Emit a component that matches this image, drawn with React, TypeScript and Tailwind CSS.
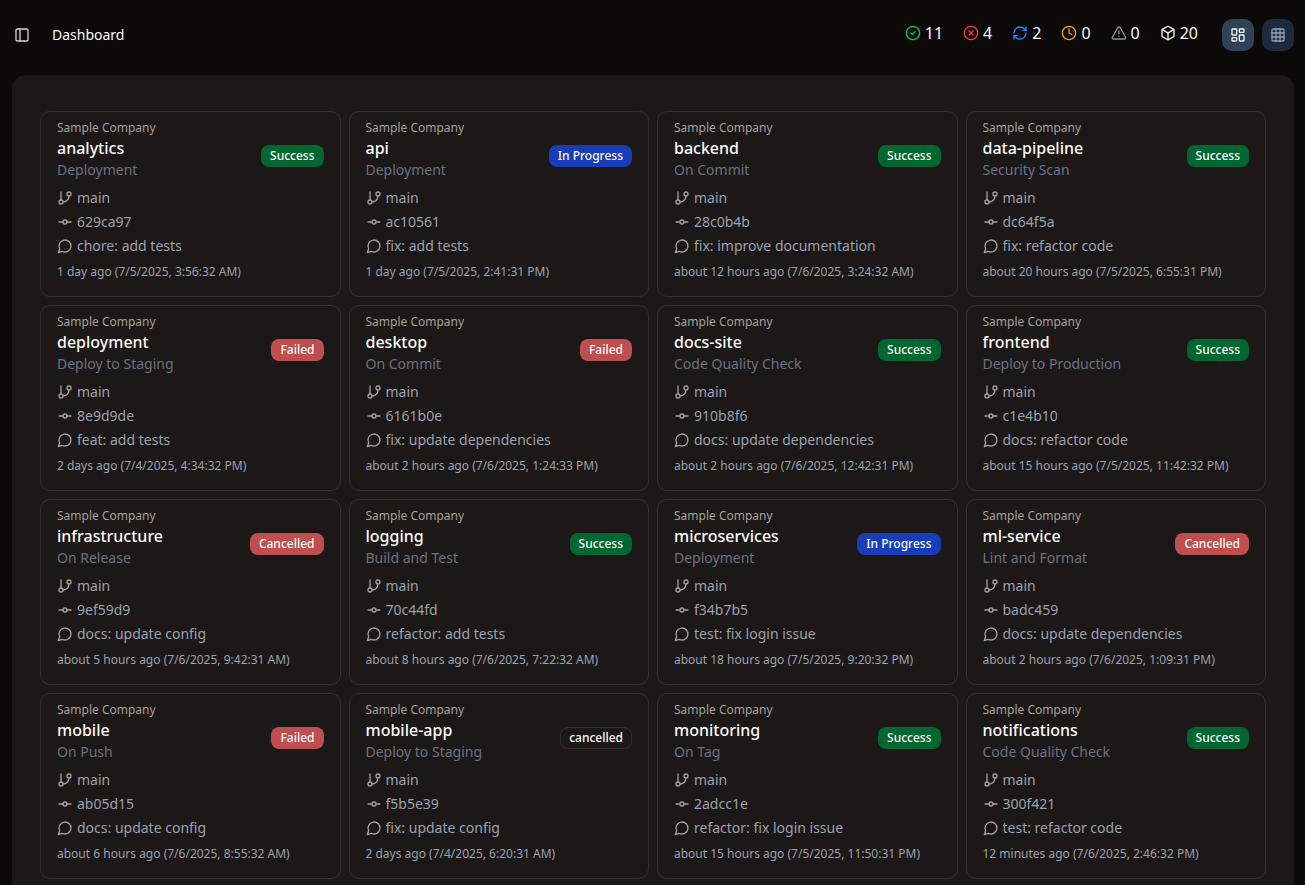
import { useState } from 'react';
import type { ReactNode } from 'react';
import {
  Box,
  CircleCheck,
  CircleX,
  Clock,
  GitBranch,
  GitCommitHorizontal,
  Grid3x3,
  LayoutDashboard,
  PanelLeft,
  RefreshCw,
  TriangleAlert,
} from 'lucide-react';

type Status = 'Success' | 'In Progress' | 'Failed' | 'Cancelled' | 'cancelled';

interface Run {
  name: string;
  workflow: string;
  status: Status;
  commit: string;
  message: string;
  time: string;
}

const badgeStyles: Record<Status, string> = {
  Success: 'border-transparent bg-[#016630]',
  'In Progress': 'border-transparent bg-[#193cb8]',
  Failed: 'border-transparent bg-[#bf4e4e]',
  Cancelled: 'border-transparent bg-[#bf4e4e]',
  cancelled: 'border-[#32302f]',
};

const runs: Run[] = [
  { name: 'analytics', workflow: 'Deployment', status: 'Success', commit: '629ca97', message: 'chore: add tests', time: '1 day ago (7/5/2025, 3:56:32 AM)' },
  { name: 'api', workflow: 'Deployment', status: 'In Progress', commit: 'ac10561', message: 'fix: add tests', time: '1 day ago (7/5/2025, 2:41:31 PM)' },
  { name: 'backend', workflow: 'On Commit', status: 'Success', commit: '28c0b4b', message: 'fix: improve documentation', time: 'about 12 hours ago (7/6/2025, 3:24:32 AM)' },
  { name: 'data-pipeline', workflow: 'Security Scan', status: 'Success', commit: 'dc64f5a', message: 'fix: refactor code', time: 'about 20 hours ago (7/5/2025, 6:55:31 PM)' },
  { name: 'deployment', workflow: 'Deploy to Staging', status: 'Failed', commit: '8e9d9de', message: 'feat: add tests', time: '2 days ago (7/4/2025, 4:34:32 PM)' },
  { name: 'desktop', workflow: 'On Commit', status: 'Failed', commit: '6161b0e', message: 'fix: update dependencies', time: 'about 2 hours ago (7/6/2025, 1:24:33 PM)' },
  { name: 'docs-site', workflow: 'Code Quality Check', status: 'Success', commit: '910b8f6', message: 'docs: update dependencies', time: 'about 2 hours ago (7/6/2025, 12:42:31 PM)' },
  { name: 'frontend', workflow: 'Deploy to Production', status: 'Success', commit: 'c1e4b10', message: 'docs: refactor code', time: 'about 15 hours ago (7/5/2025, 11:42:32 PM)' },
  { name: 'infrastructure', workflow: 'On Release', status: 'Cancelled', commit: '9ef59d9', message: 'docs: update config', time: 'about 5 hours ago (7/6/2025, 9:42:31 AM)' },
  { name: 'logging', workflow: 'Build and Test', status: 'Success', commit: '70c44fd', message: 'refactor: add tests', time: 'about 8 hours ago (7/6/2025, 7:22:32 AM)' },
  { name: 'microservices', workflow: 'Deployment', status: 'In Progress', commit: 'f34b7b5', message: 'test: fix login issue', time: 'about 18 hours ago (7/5/2025, 9:20:32 PM)' },
  { name: 'ml-service', workflow: 'Lint and Format', status: 'Cancelled', commit: 'badc459', message: 'docs: update dependencies', time: 'about 2 hours ago (7/6/2025, 1:09:31 PM)' },
  { name: 'mobile', workflow: 'On Push', status: 'Failed', commit: 'ab05d15', message: 'docs: update config', time: 'about 6 hours ago (7/6/2025, 8:55:32 AM)' },
  { name: 'mobile-app', workflow: 'Deploy to Staging', status: 'cancelled', commit: 'f5b5e39', message: 'fix: update config', time: '2 days ago (7/4/2025, 6:20:31 AM)' },
  { name: 'monitoring', workflow: 'On Tag', status: 'Success', commit: '2adcc1e', message: 'refactor: fix login issue', time: 'about 15 hours ago (7/5/2025, 11:50:31 PM)' },
  { name: 'notifications', workflow: 'Code Quality Check', status: 'Success', commit: '300f421', message: 'test: refactor code', time: '12 minutes ago (7/6/2025, 2:46:32 PM)' },
];

const stats = [
  { label: 'Successful', icon: CircleCheck, color: 'text-[#00c950]', value: 11 },
  { label: 'Failed', icon: CircleX, color: 'text-[#f03a35]', value: 4 },
  { label: 'In progress', icon: RefreshCw, color: 'text-[#2b7fff]', value: 2 },
  { label: 'Queued', icon: Clock, color: 'text-[#f59e0b]', value: 0 },
  { label: 'Warnings', icon: TriangleAlert, color: 'text-[#8393a3]', value: 0 },
  { label: 'Total', icon: Box, color: 'text-[#fafaf9]', value: 20 },
];

function CommentIcon() {
  return (
    <svg
      className="size-4 shrink-0"
      viewBox="0 0 24 24"
      fill="none"
      stroke="currentColor"
      strokeWidth="2"
      strokeLinecap="round"
      strokeLinejoin="round"
      aria-hidden="true"
    >
      <path d="M7.9 20A9 9 0 1 0 4 16.1L2 22Z" />
    </svg>
  );
}

function Detail({ icon, children }: { icon: ReactNode; children: ReactNode }) {
  return (
    <li className="flex items-center gap-1 text-[#a6a09b]">
      {icon}
      <span className="truncate text-sm text-[#99a1af]">{children}</span>
    </li>
  );
}

function RunCard({ run }: { run: Run }) {
  return (
    <article className="min-w-0 rounded-[10px] border border-[#32302f] px-4 pt-2 pb-4">
      <header className="flex items-center justify-between gap-2">
        <div className="min-w-0">
          <p className="truncate text-xs text-[#a6a09b]">Sample Company</p>
          <h2 className="truncate text-base font-medium">{run.name}</h2>
          <p className="truncate text-sm text-[#6a7282]">{run.workflow}</p>
        </div>
        <span className={`mt-3 shrink-0 rounded-lg border px-2 py-0.5 text-xs font-medium ${badgeStyles[run.status]}`}>
          {run.status}
        </span>
      </header>
      <ul className="mt-2 flex flex-col gap-1">
        <Detail icon={<GitBranch size={16} />}>main</Detail>
        <Detail icon={<GitCommitHorizontal size={16} />}>{run.commit}</Detail>
        <Detail icon={<CommentIcon />}>{run.message}</Detail>
      </ul>
      <p className="mt-2 truncate text-xs text-[#99a1af]">{run.time}</p>
    </article>
  );
}

export default function App() {
  const [view, setView] = useState<'cards' | 'table'>('cards');
  const viewClass = (active: boolean) =>
    `flex size-8 items-center justify-center rounded-[10px] ${
      active ? 'bg-[#314158] text-[#f1f5f9]' : 'bg-[#1d293d] text-[#8fa1b1]'
    }`;

  return (
    <div className="flex min-h-screen flex-col bg-[#0c0a09] pr-[11px] pl-3 font-['Noto_Sans',sans-serif] text-[#fafaf9]">
      <header className="flex h-[75px] shrink-0 items-center justify-between pb-[5px]">
        <div className="flex items-center gap-3">
          <button type="button" aria-label="Toggle sidebar" className="flex h-7 w-7 items-center pl-0.5 text-[#d6d3d1]">
            <PanelLeft size={16} />
          </button>
          <h1 className="text-sm">Dashboard</h1>
        </div>
        <div className="flex items-center gap-6">
          <ul className="flex items-center gap-5 pb-1">
            {stats.map(({ label, icon: Icon, color, value }) => (
              <li key={label} title={label} className="flex items-center gap-1">
                <Icon size={16} className={color} />
                <span>{value}</span>
              </li>
            ))}
          </ul>
          <div className="flex gap-2">
            <button type="button" aria-label="Card view" aria-pressed={view === 'cards'} onClick={() => setView('cards')} className={viewClass(view === 'cards')}>
              <LayoutDashboard size={16} />
            </button>
            <button type="button" aria-label="Table view" aria-pressed={view === 'table'} onClick={() => setView('table')} className={viewClass(view === 'table')}>
              <Grid3x3 size={16} />
            </button>
          </div>
        </div>
      </header>
      <main className="grow rounded-t-[14px] bg-[#1c1817] px-7 pt-9 pb-1.5">
        <div className="grid grid-cols-4 gap-2">
          {runs.map((run) => (
            <RunCard key={run.name} run={run} />
          ))}
        </div>
      </main>
    </div>
  );
}
